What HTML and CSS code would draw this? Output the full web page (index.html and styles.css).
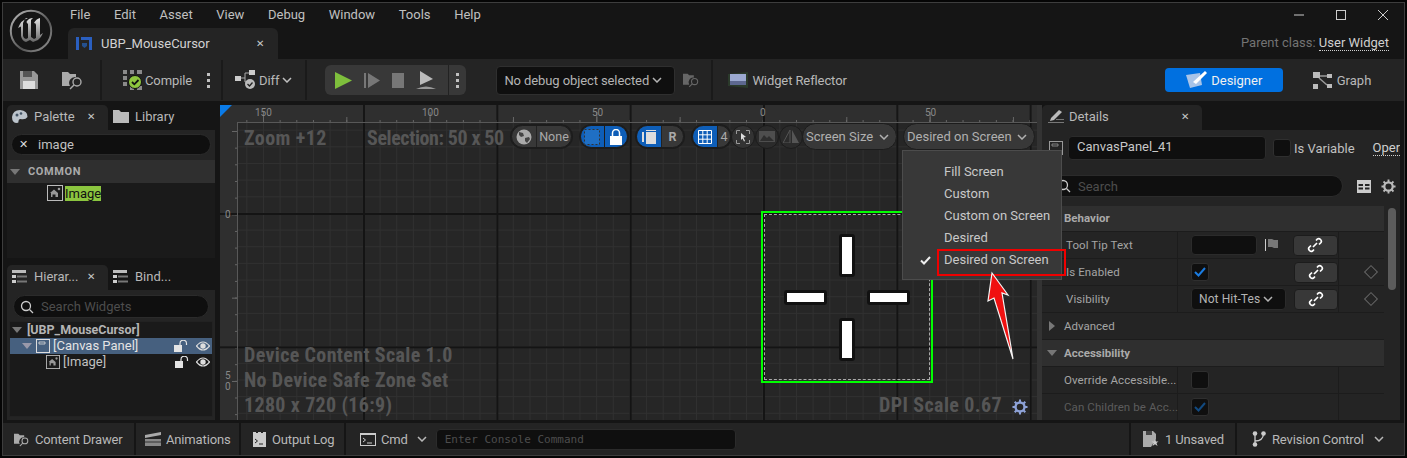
FILE: index.html
```html
<!DOCTYPE html>
<html lang="en">
    <head>
        <meta charset="UTF-8" />
        <title>UBP_MouseCursor</title>
        <link rel="stylesheet" href="styles.css">
    </head>
    <body>
        <svg class="defs" width="0" height="0">
            <symbol id="chev" viewBox="0 0 10 6"><path d="M1 1l4 4 4-4" fill="none" stroke="currentColor" stroke-width="1.5"/></symbol>
            <symbol id="link" viewBox="0 0 16 16"><path d="M9 3.5l1.5-1.5q1.5-1 3 .5t.5 3L12 7.500M7 12.500L5.500 14q-1.500 1-3-.5t-.5-3L4 8.500M6 10l4-4" fill="none" stroke="#fff" stroke-width="1.700"/></symbol>
            <symbol id="unlock" viewBox="0 0 14 12"><rect x="0" y="5" width="8" height="7" fill="#e4e4e4"/><path d="M6 5V3.500a3 3 0 0 1 6.500 0V5" fill="none" stroke="#e4e4e4" stroke-width="1.200"/></symbol>
            <symbol id="eye" viewBox="0 0 14 10"><path d="M.5 5Q7-3 13.500 5Q7 13 .5 5z" fill="none" stroke="#ddd" stroke-width="1.200"/><circle cx="7" cy="5" r="2.700" fill="#ddd"/></symbol>
            <symbol id="img" viewBox="0 0 16 16"><rect x=".5" y=".5" width="15" height="15" fill="none" stroke="#bbb"/><path d="M3 8l4-3.500L11 8v4H8.500V9.500h-3V12H4V8z" fill="#999"/><circle cx="12" cy="4" r="1.300" fill="#999"/></symbol>
            <symbol id="finder" viewBox="0 0 22 20"><path d="M0 2h6l2 2h6v3a6 6 0 0 0-6 9H0z" fill="currentColor"/><circle cx="15" cy="12" r="4" fill="none" stroke="currentColor" stroke-width="1.400"/><path d="M12 15l-4 4" stroke="currentColor" stroke-width="1.400"/></symbol>
            <symbol id="gear" viewBox="0 0 16 16"><circle cx="8" cy="8" r="4.500" fill="none" stroke="currentColor" stroke-width="2.400"/><path d="M8 .5v3M8 12.500v3M.5 8h3M12.500 8h3M2.700 2.700l2 2M11.300 11.300l2 2M13.300 2.700l-2 2M4.700 11.300l-2 2" stroke="currentColor" stroke-width="2"/></symbol>
            <symbol id="list" viewBox="0 0 16 13"><path d="M0 5h4v3H0zM0 10h4v3H0z" fill="#ccc"/><path d="M0 0h14v3H0z" fill="#bbb"/><path d="M5 5.500h10v2H5zM5 10.500h10v2H5z" fill="#777"/></symbol>
        </svg>
        <div class="app">
            <header class="titlebar">
                <div class="logo">
                    <svg width="44" height="44" viewBox="0 0 44 44">
                        <defs>
                            <linearGradient id="lg" x1="0" y1="0" x2="0" y2="1"><stop offset="0" stop-color="#e4e4e4"/><stop offset="1" stop-color="#666"/></linearGradient>
                            <linearGradient id="ring" x1="0" y1="0" x2="1" y2="1"><stop offset="0" stop-color="#bbb"/><stop offset=".6" stop-color="#555"/><stop offset="1" stop-color="#999"/></linearGradient>
                        </defs>
                        <circle cx="22" cy="22" r="20.200" fill="#161616" stroke="url(#ring)" stroke-width="2"/>
                        <path d="M19 9Q12 11 9 19l3-1.500V27q1 5 5 6l4-2 3 2 5-2q3-2 5-7l-3 2V9q-4 1-6 5 2 0 2 2v13l-2 1-3-2V11q1-1 2-2-4 0-6 3-1 1 0 2l1 1v14l-2 1-2-1-1-2V14q1-3 3-5z" fill="url(#lg)"/>
                    </svg>
                </div>
                <div class="title-mid">
                    <nav class="menu">
                        <span>File</span><span>Edit</span><span>Asset</span><span>View</span><span>Debug</span><span>Window</span><span>Tools</span><span>Help</span>
                    </nav>
                    <div class="doc-tab">
                        <svg width="16" height="13" viewBox="0 0 16 13"><path d="M0 0h3v13H0zM5 0h11v3H5zM13 3h3v10h-3z" fill="#2a5fc0"/><path d="M6 6h5v3l-2.500 2L6 9z" fill="#24508f"/></svg>
                        <span class="doc-name">UBP_MouseCursor</span>
                        <span class="x">&#x2715;</span>
                    </div>
                </div>
                <div class="title-right">
                    <div class="win-btns">
                        <svg width="12" height="12" viewBox="0 0 12 12"><path d="M1 6h10" stroke="#ccc"/></svg>
                        <svg width="12" height="12" viewBox="0 0 12 12"><rect x="1.500" y="1.500" width="9" height="9" fill="none" stroke="#ccc"/></svg>
                        <svg width="12" height="12" viewBox="0 0 12 12"><path d="M1 1l10 10M11 1L1 11" stroke="#ccc"/></svg>
                    </div>
                    <div class="parent-class">Parent class: <span class="dotted">User Widget</span></div>
                </div>
            </header>

            <div class="toolbar">
                <svg class="save" width="18" height="18" viewBox="0 0 18 18"><path d="M0 0h14l4 4v14H0z" fill="#999"/><path d="M3 0h9v6H3z" fill="#555"/><path d="M3 10h12v8H3z" fill="#ddd"/></svg>
                <svg class="browse" width="22" height="20" style="color:#aaa"><use href="#finder"/></svg>
                <i class="sep s1"></i>
                <svg class="compile-ic" width="21" height="20" viewBox="0 0 21 20">
                    <path d="M1 0h4v4H1zM8 0h4v4H8zM15 0h5v4h-5zM1 6h4v4H1zM1 12h4v4H1zM8 16h4v4H8zM15 16h5v4h-5z" fill="#8a8a8a"/>
                    <circle cx="13" cy="12" r="6.500" fill="#8ec63f" stroke="#111"/>
                    <path d="M10 12l2.300 2.300L16.500 10" fill="none" stroke="#111" stroke-width="1.800"/>
                </svg>
                <span class="tool-text compile">Compile</span>
                <span class="dots d1"><b></b><b></b><b></b></span>
                <i class="sep s2"></i>
                <svg class="diff-ic" width="22" height="20" viewBox="0 0 22 20"><path d="M0 6h6v5H0zM14 0h6v5h-6z" fill="#ccc"/><path d="M6 8h4V3h4M10 8v4h4" fill="none" stroke="#aaa"/><circle cx="15" cy="14" r="5" fill="#bbb"/><path d="M12.500 14l2 2 3-3.500" fill="none" stroke="#222" stroke-width="1.300"/></svg>
                <span class="tool-text diff">Diff</span>
                <svg class="chev" width="10" height="6"><use href="#chev"/></svg>
                <i class="sep s3"></i>
                <div class="play-group">
                    <svg width="17" height="17" viewBox="0 0 17 17"><path d="M0 0l17 8.500L0 17z" fill="#7ebf3c"/></svg>
                    <svg width="16" height="15" viewBox="0 0 16 15"><path d="M0 0h2v15H0zM4 0l12 7.500L4 15z" fill="#777"/></svg>
                    <span class="stop"></span>
                    <svg width="20" height="18" viewBox="0 0 20 18"><path d="M4 0l13 8-13 6z" fill="#bbb"/><path d="M0 18q10-5 20 0z" fill="#999"/></svg>
                    <span class="play-more"><span class="dots"><b></b><b></b><b></b></span></span>
                </div>
                <div class="debug-select">No debug object selected <svg width="10" height="6"><use href="#chev"/></svg></div>
                <svg class="debug-find" width="17" height="16" viewBox="0 0 22 20" style="color:#666"><use href="#finder"/></svg>
                <i class="sep s4"></i>
                <svg class="reflector-ic" width="20" height="16" viewBox="0 0 20 16"><path d="M0 2l20-2v16L0 14z" fill="#2b3a2b"/><rect x="2" y="2" width="16" height="11" fill="#9ba8d0"/><path d="M2 9h16v4H2z" fill="#5d6890"/></svg>
                <span class="tool-text reflector">Widget Reflector</span>
                <div class="mode-btn">
                    <svg width="24" height="20" viewBox="0 0 24 20"><path d="M1 5l14-2 2 12-12 3z" fill="#a8c4e8"/><path d="M8 12L20 1l2 2-11 11z" fill="#fff"/></svg>
                    Designer
                </div>
                <div class="graph-btn">
                    <svg width="19" height="17" viewBox="0 0 19 17"><path d="M0 0h7v6H0zM14 2h5v4h-5zM0 12h5v5H0zM14 12h5v4h-5z" fill="#bbb"/><path d="M7 4h7M6 6l8 7" stroke="#999" stroke-width="1.500"/></svg>
                    Graph
                </div>
            </div>

            <div class="main">
                <aside class="left-col">
                    <section class="panel palette">
                        <div class="tabs">
                            <div class="tab active">
                                <svg width="16" height="14" viewBox="0 0 16 14"><path d="M8 0Q1 0 0 7q0 6 5 6 2 0 1.500-2 0-2 2-2 5 1 7-2Q16 1 8 0z" fill="#bcc4cc"/><circle cx="5" cy="5" r="1.500" fill="#456"/><circle cx="9" cy="3.500" r="1.300" fill="#456"/></svg>
                                <span class="tab-label">Palette</span><span class="x">&#x2715;</span>
                            </div>
                            <div class="tab">
                                <svg width="16" height="13" viewBox="0 0 16 13"><path d="M0 0h6l2 2h8v11H0z" fill="#bbb"/></svg>
                                <span class="tab-label">Library</span>
                            </div>
                        </div>
                        <div class="panel-body">
                            <div class="pill-search filled"><span class="clear">&#x2715;</span>image</div>
                            <div class="cat-head"><i class="tri-down"></i>COMMON</div>
                            <div class="cat-list">
                                <div class="cat-item"><svg width="16" height="16"><use href="#img"/></svg><mark>Image</mark></div>
                            </div>
                        </div>
                    </section>
                    <section class="panel hierarchy">
                        <div class="tabs">
                            <div class="tab active">
                                <svg width="16" height="13"><use href="#list"/></svg>
                                <span class="tab-label">Hierar...</span><span class="x">&#x2715;</span>
                            </div>
                            <div class="tab">
                                <svg width="16" height="13"><use href="#list"/></svg>
                                <span class="tab-label">Bind...</span>
                            </div>
                        </div>
                        <div class="panel-body">
                            <div class="pill-search hint">
                                <svg width="14" height="14" viewBox="0 0 14 14"><circle cx="6" cy="6" r="4.500" fill="none" stroke="#ccc" stroke-width="1.300"/><path d="M9.500 9.500L13 13" stroke="#ccc" stroke-width="1.300"/></svg>
                                Search Widgets
                            </div>
                            <div class="tree">
                                <div class="tree-row root"><i class="tri-down"></i>[UBP_MouseCursor]</div>
                                <div class="tree-row selected">
                                    <i class="tri-down"></i>
                                    <svg class="panel-ic" width="14" height="14" viewBox="0 0 14 14"><rect x=".5" y=".5" width="13" height="13" fill="none" stroke="#ddd"/><path d="M3 3h6v2H3z" fill="none" stroke="#ddd" stroke-width=".8"/></svg>
                                    <span class="tree-name">[Canvas Panel]</span>
                                    <svg class="lock" width="14" height="12"><use href="#unlock"/></svg>
                                    <svg class="eye" width="14" height="10"><use href="#eye"/></svg>
                                </div>
                                <div class="tree-row child">
                                    <svg width="16" height="14"><use href="#img"/></svg>
                                    <span class="tree-name">[Image]</span>
                                    <svg class="lock" width="14" height="12"><use href="#unlock"/></svg>
                                    <svg class="eye" width="14" height="10"><use href="#eye"/></svg>
                                </div>
                            </div>
                        </div>
                    </section>
                </aside>

                <section class="canvas">
                    <div class="ruler-top"></div>
                    <div class="ruler-left"></div>
                    <div class="corner"></div>
                    <div class="grid"></div>
                    <span class="rnum" style="left:35px">150</span>
                    <span class="rnum" style="left:202px">100</span>
                    <span class="rnum" style="left:372px">50</span>
                    <span class="rnum" style="left:540px">0</span>
                    <span class="rnum" style="left:705px">50</span>
                    <span class="rnum-v" style="top:104px">0</span>
                    <span class="rnum-v" style="top:265px">5<br>0</span>

                    <div class="big-text zoom-text">Zoom +12</div>
                    <div class="big-text sel-text">Selection: 50 x 50</div>
                    <div class="big-text device-text">Device Content Scale 1.0<br>No Device Safe Zone Set<br>1280 x 720 (16:9)</div>
                    <div class="big-text dpi-text">DPI Scale 0.67</div>
                    <svg class="dpi-gear" width="16" height="16"><use href="#gear"/></svg>

                    <div class="view-bar">
                        <div class="pill p-none">
                            <span class="seg icon-seg">
                                <svg width="16" height="16" viewBox="0 0 16 16"><circle cx="8" cy="8" r="7.500" fill="#aaa"/><path d="M3 3l4 1 1 3-3 1-2-2zM9 9l4-1 1 2-3 4-2-2z" fill="#444"/></svg>
                            </span>
                            <span class="seg txt">None</span>
                        </div>
                        <div class="pill p-lock">
                            <span class="seg on">
                                <svg width="16" height="16" viewBox="0 0 16 16"><rect x=".5" y=".5" width="15" height="15" fill="#1f6fc4" stroke="#333" stroke-dasharray="2 2"/></svg>
                            </span>
                            <span class="seg on">
                                <svg width="14" height="16" viewBox="0 0 14 16"><rect x="1" y="7" width="12" height="9" fill="#fff"/><path d="M3.500 7V4a3.500 3.500 0 0 1 7 0v3" fill="none" stroke="#fff" stroke-width="1.500"/></svg>
                            </span>
                        </div>
                        <div class="pill p-r">
                            <span class="seg on">
                                <svg width="14" height="14" viewBox="0 0 14 14"><path d="M0 2h2v10H0zM4 2h10v12H4zM4 0h10v1H4z" fill="#ddd"/></svg>
                            </span>
                            <span class="seg txt bold">R</span>
                        </div>
                        <div class="pill p-grid">
                            <span class="seg on">
                                <svg width="14" height="14" viewBox="0 0 14 14"><path d="M.5 .5h13v13h-13zM.5 4.800h13M.5 9.200h13M4.800 .5v13M9.200 .5v13" fill="none" stroke="#fff"/></svg>
                            </span>
                            <span class="seg txt">4</span>
                        </div>
                        <span class="round">
                            <svg width="14" height="14" viewBox="0 0 14 14"><path d="M.5 4V.5H4M10 .5h3.500V4M13.500 10v3.500H10M4 13.500H.5V10" fill="none" stroke="#999"/><path d="M5 3l5 4-2.500 .5L9 11l-1 .5-1.500-3L5 10z" fill="#ddd"/></svg>
                        </span>
                        <span class="round dim">
                            <svg width="16" height="11" viewBox="0 0 16 11"><path d="M0 0h16v11H0z" fill="#4e4e4e"/><path d="M1 10l4-6 3 3 2-2 5 5z" fill="#2e2e2e"/></svg>
                        </span>
                        <span class="round dim last">
                            <svg width="16" height="13" viewBox="0 0 16 13"><path d="M7 0v13H0z" fill="none" stroke="#555"/><path d="M9 0v13h7z" fill="#555"/></svg>
                        </span>
                        <div class="drop size-drop">Screen Size <svg width="10" height="6"><use href="#chev"/></svg></div>
                        <div class="drop fill-drop">Desired on Screen <svg width="10" height="6"><use href="#chev"/></svg></div>
                    </div>

                    <div class="widget">
                        <i class="bar v top"></i>
                        <i class="bar v bottom"></i>
                        <i class="bar h left"></i>
                        <i class="bar h right"></i>
                    </div>
                </section>

                <aside class="details">
                    <div class="tabs">
                        <div class="tab active details-tab">
                            <svg width="16" height="15" viewBox="0 0 16 15"><path d="M3 9L11 1l3 2-8 8-4 1z" fill="#bbb"/><path d="M0 13h16v1H0zM8 10h8v1H8z" fill="#777"/></svg>
                            <span class="tab-label">Details</span><span class="x">&#x2715;</span>
                        </div>
                    </div>
                    <div class="details-body">
                        <div class="name-row">
                            <svg width="14" height="14" viewBox="0 0 14 14"><rect x=".5" y=".5" width="13" height="13" fill="none" stroke="#999"/><path d="M3 3h6v2H3z" fill="none" stroke="#999" stroke-width=".8"/></svg>
                            <div class="name-input">CanvasPanel_41</div>
                            <span class="check"></span>
                            <span class="var-label">Is Variable</span>
                            <span class="open-link dotted">Oper</span>
                        </div>
                        <div class="search-row">
                            <div class="pill-search hint wide">
                                <svg width="14" height="14" viewBox="0 0 14 14"><circle cx="6" cy="6" r="4.500" fill="none" stroke="#ccc" stroke-width="1.300"/><path d="M9.500 9.500L13 13" stroke="#ccc" stroke-width="1.300"/></svg>
                                Search
                            </div>
                            <svg width="14" height="13" viewBox="0 0 14 13"><path d="M0 0h14v13H0z" fill="#ccc"/><path d="M1.500 4h4.500v2H1.500zM8 4h4.500v2H8zM1.500 7.500h4.500v2H1.500zM8 7.500h4.500v2H8z" fill="#242424"/></svg>
                            <svg class="opt-gear" width="15" height="15"><use href="#gear"/></svg>
                        </div>
                        <div class="props-wrap">
                            <div class="props">
                                <div class="sec-head">Behavior</div>
                                <div class="prop">
                                    <span class="p-name">Tool Tip Text</span>
                                    <span class="p-value"><span class="text-box"></span>
                                        <svg class="flag" width="14" height="12" viewBox="0 0 14 12"><path d="M0 0h1v12H0z" fill="#ccc"/><path d="M3 0h4l2 1h4v8H9L7 8H3z" fill="#777"/></svg>
                                        <span class="bind"><svg width="16" height="16"><use href="#link"/></svg></span>
                                    </span>
                                    <span class="p-reset"></span>
                                </div>
                                <div class="prop">
                                    <span class="p-name">Is Enabled</span>
                                    <span class="p-value"><span class="check on"><svg width="12" height="10" viewBox="0 0 12 10"><path d="M1 5l3.500 3.500L11 1" fill="none" stroke="#1a7be0" stroke-width="2"/></svg></span>
                                        <span class="bind"><svg width="16" height="16"><use href="#link"/></svg></span>
                                    </span>
                                    <span class="p-reset"><i class="diamond"></i></span>
                                </div>
                                <div class="prop">
                                    <span class="p-name">Visibility</span>
                                    <span class="p-value"><span class="vis-select">Not Hit-Tes <svg width="10" height="6"><use href="#chev"/></svg></span>
                                        <span class="bind near"><svg width="16" height="16"><use href="#link"/></svg></span>
                                    </span>
                                    <span class="p-reset"><i class="diamond"></i></span>
                                </div>
                                <div class="sec-row"><i class="tri-right"></i>Advanced</div>
                                <div class="sec-head open"><i class="tri-down"></i>Accessibility</div>
                                <div class="prop acc">
                                    <span class="p-name">Override Accessible...</span>
                                    <span class="p-value"><span class="check"></span></span>
                                    <span class="p-reset"></span>
                                </div>
                                <div class="prop acc off">
                                    <span class="p-name">Can Children be Acc...</span>
                                    <span class="p-value"><span class="check on"><svg width="12" height="10" viewBox="0 0 12 10"><path d="M1 5l3.500 3.500L11 1" fill="none" stroke="#124a80" stroke-width="2"/></svg></span></span>
                                    <span class="p-reset"></span>
                                </div>
                            </div>
                            <div class="scroll"><i></i></div>
                        </div>
                    </div>
                </aside>
            </div>

            <footer class="statusbar">
                <div class="st-item drawer">
                    <svg width="16" height="15" viewBox="0 0 22 20" style="color:#aaa"><use href="#finder"/></svg>
                    Content Drawer
                </div>
                <div class="st-item anim">
                    <svg width="16" height="14" viewBox="0 0 16 14"><path d="M0 7h16v7H0z" fill="#888"/><path d="M0 3l16-3v3L0 6z" fill="#aaa"/><path d="M0 10h16" stroke="#333"/></svg>
                    Animations
                </div>
                <div class="st-item log">
                    <svg width="13" height="16" viewBox="0 0 13 16"><path d="M0 1h3v1h2V1h3v1h2V1h3v15H0z" fill="#ccc"/><path d="M2 8l2.500 2L2 12M6 13h4" fill="none" stroke="#222"/></svg>
                    Output Log
                </div>
                <div class="st-item cmd">
                    <svg width="16" height="13" viewBox="0 0 16 13"><rect x=".5" y=".5" width="15" height="12" fill="none" stroke="#ccc"/><path d="M0 0h16v2H0z" fill="#ccc"/><path d="M3 5l2.500 2L3 9M7 10h5" fill="none" stroke="#ccc"/></svg>
                    Cmd
                    <svg class="cmd-chev" width="10" height="6"><use href="#chev"/></svg>
                    <div class="console">Enter Console Command</div>
                </div>
                <div class="st-item unsaved">
                    <svg width="16" height="16" viewBox="0 0 16 16"><path d="M0 0h10l3 3v5l-5 8H0z" fill="#aaa"/><path d="M3 0h6v4H3z" fill="#444"/><path d="M12 8l1 2.500h2.500L13.500 12l1 3-2.500-1.700L9.500 15l1-3-2-1.500H11z" fill="#ccc"/></svg>
                    1 Unsaved
                </div>
                <div class="st-item revision">
                    <svg width="14" height="16" viewBox="0 0 14 16"><circle cx="3" cy="2.500" r="2.300" fill="#ccc"/><circle cx="3" cy="13.500" r="2.300" fill="#ccc"/><circle cx="11.500" cy="2.500" r="2.300" fill="#ccc"/><path d="M3 3v9M3 10q8 0 8.500-7" fill="none" stroke="#ccc" stroke-width="1.300"/></svg>
                    Revision Control
                    <svg class="cmd-chev" width="10" height="6"><use href="#chev"/></svg>
                </div>
            </footer>

            <div class="size-menu">
                <div class="menu-item">Fill Screen</div>
                <div class="menu-item">Custom</div>
                <div class="menu-item">Custom on Screen</div>
                <div class="menu-item">Desired</div>
                <div class="menu-item current">
                    <svg class="tick" width="11" height="9" viewBox="0 0 11 9"><path d="M1 4.500l3 3L10 1" fill="none" stroke="#eee" stroke-width="2"/></svg>
                    Desired on Screen
                </div>
            </div>
            <svg class="callout" width="32" height="92" viewBox="0 0 32 92">
                <path d="M8 2L24 24 18 22 29 88 10 27 4 30z" fill="#f01010" stroke="#f4f4f4" stroke-width="1.200"/>
            </svg>
        </div>
    </body>
</html>
```

FILE: styles.css
```css
* {
    box-sizing: border-box;
}
html,
body {
    margin: 0;
    width: 1407px;
    height: 458px;
    overflow: hidden;
    background-color: #050505;
}
body {
    font-family: Roboto, "Noto Sans", sans-serif;
    font-size: 13px;
    color: #c0c0c0;
}
.defs {
    position: absolute;
}
svg {
    flex: none;
    display: block;
}
.app {
    position: relative;
    margin: 2px;
    width: 1403px;
    height: 454px;
    border: 1px solid #3d3d3d;
    background-color: #151515;
    display: flex;
    flex-direction: column;
}
.dotted {
    color: #d0d0d0;
    border-bottom: 1px dotted #d0d0d0;
}
.x {
    font-size: 10px;
    color: #c8c8c8;
}

/* title bar */
.titlebar {
    height: 56px;
    display: flex;
    flex: none;
}
.logo {
    width: 65px;
    padding: 6px 0 0 6px;
}
.title-mid {
    flex: 1;
    display: flex;
    flex-direction: column;
}
.menu {
    height: 25px;
    display: flex;
    align-items: center;
    gap: 23.6px;
    padding: 0 0 2px 2px;
}
.doc-tab {
    width: 210px;
    height: 31px;
    background-color: #242424;
    border-radius: 6px 6px 0 0;
    display: flex;
    align-items: center;
    padding: 0 14px 0 8px;
}
.doc-name {
    flex: 1;
    margin-left: 9px;
    color: #d2d2d2;
}
.title-right {
    width: 170px;
    padding-right: 15px;
    text-align: right;
}
.win-btns {
    display: flex;
    justify-content: flex-end;
    gap: 30px;
    height: 25px;
    padding-top: 6px;
}
.parent-class {
    color: #737373;
    padding-top: 7px;
    white-space: nowrap;
}

/* toolbar */
.toolbar {
    height: 42px;
    flex: none;
    background-color: #242424;
    display: flex;
    align-items: center;
    padding-left: 17px;
}
.tool-text {
    color: #b8b8b8;
    letter-spacing: -0.1px;
}
.sep {
    width: 2px;
    height: 40px;
    background-color: #1a1a1a;
    flex: none;
}
.browse { margin-left: 24px; }
.s1 { margin-left: 16px; }
.compile-ic { margin-left: 20px; }
.compile { margin-left: 2px; }
.dots {
    display: inline-flex;
    flex-direction: column;
    gap: 3px;
}
.dots b {
    width: 3px;
    height: 3px;
    background-color: #c0c0c0;
}
.d1 { margin-left: 15px; }
.s2 { margin-left: 11px; }
.diff-ic { margin-left: 12px; }
.diff { margin-left: 2px; }
.chev { margin-left: 3px; }
.s3 { margin-left: 13px; }
.play-group {
    margin-left: 18px;
    width: 141px;
    height: 30px;
    background-color: #383838;
    border-radius: 6px;
    display: flex;
    align-items: center;
    padding-left: 10px;
    gap: 12px;
    flex: none;
}
.stop {
    width: 14px;
    height: 15px;
    background-color: #777;
}
.play-more {
    margin-left: auto;
    width: 22px;
    height: 30px;
    border-left: 1px solid #222;
    display: flex;
    align-items: center;
    justify-content: center;
}
.debug-select {
    margin-left: 30px;
    width: 179px;
    height: 29px;
    background-color: #0f0f0f;
    border: 1px solid #2f2f2f;
    border-radius: 4px;
    display: flex;
    align-items: center;
    justify-content: space-between;
    padding: 0 12px 0 7px;
    color: #b4b4b4;
    letter-spacing: -0.1px;
    white-space: nowrap;
    flex: none;
}
.debug-find { margin-left: 8px; }
.s4 { margin-left: 11px; }
.reflector-ic { margin-left: 15px; }
.reflector { margin-left: 4px; }
.mode-btn {
    margin-left: 318px;
    width: 118px;
    height: 24px;
    background-color: #0070e0;
    border-radius: 4px;
    color: #f0f0f0;
    display: flex;
    align-items: center;
    justify-content: center;
    gap: 2px;
}
.graph-btn {
    margin-left: 30px;
    display: flex;
    align-items: center;
    gap: 5px;
    color: #b8b8b8;
}

/* main area */
.main {
    flex: 1;
    display: flex;
    padding: 4px 0 0 4px;
    min-height: 0;
}
.left-col {
    width: 208px;
    display: flex;
    flex-direction: column;
    gap: 7px;
}
.panel {
    display: flex;
    flex-direction: column;
}
.palette { height: 153px; }
.hierarchy { height: 155px; }
.tabs {
    height: 25px;
    display: flex;
    flex: none;
}
.tab {
    width: 101px;
    display: flex;
    align-items: center;
    padding: 0 13px 2px 5px;
    border-radius: 5px 5px 0 0;
}
.tab.active {
    background-color: #242424;
}
.tab:not(.active) {
    width: 100px;
}
.tab-label {
    flex: 1;
    margin-left: 6px;
    color: #b8b8b8;
    white-space: nowrap;
}
.panel-body {
    flex: 1;
    background-color: #242424;
    display: flex;
    flex-direction: column;
    min-height: 0;
}
.pill-search {
    background-color: #0f0f0f;
    border: 1px solid #2b2b2b;
    border-radius: 12px;
    display: flex;
    align-items: center;
    margin: 4px 4px 5px;
    color: #c0c0c0;
}
.filled {
    height: 21px;
}
.clear {
    width: 26px;
    padding-left: 7px;
    font-size: 11px;
    color: #ddd;
}
.hint {
    height: 23px;
    padding-left: 6px;
    gap: 7px;
    color: #4d4d4d;
    margin: 5px 6px 3px;
}
.cat-head {
    height: 23px;
    background-color: #2f2f2f;
    display: flex;
    align-items: center;
    font-size: 11px;
    font-weight: 700;
    color: #aaa;
    letter-spacing: 0.6px;
    padding-left: 3px;
    gap: 8px;
}
.tri-down {
    width: 0;
    height: 0;
    flex: none;
    border-left: 5px solid transparent;
    border-right: 5px solid transparent;
    border-top: 6px solid #777;
}
.tri-right {
    width: 0;
    height: 0;
    flex: none;
    border-top: 5px solid transparent;
    border-bottom: 5px solid transparent;
    border-left: 6px solid #777;
}
.cat-list {
    flex: 1;
    background-color: #1a1a1a;
    padding: 2px 0 0 40px;
}
.cat-item {
    display: flex;
    align-items: center;
    gap: 2px;
}
mark {
    background-color: #8bc53f;
    color: #111;
    line-height: 15px;
}
.tree {
    flex: 1;
    margin: 0 2px 3px;
    background-color: #1a1a1a;
    border: 1px solid #222;
}
.tree-row {
    height: 16px;
    display: flex;
    align-items: center;
    white-space: nowrap;
    padding-bottom: 1px;
}
.root {
    font-weight: 700;
    font-size: 12.5px;
    color: #b4b4b4;
    padding-left: 2px;
    gap: 5px;
}
.selected {
    background-color: #46607f;
    color: #e4e4e4;
    padding-left: 12px;
    gap: 3px;
}
.child {
    padding-left: 35px;
    gap: 2px;
}
.selected .tri-down {
    border-top-color: #99a;
}
.panel-ic {
    margin-left: 1px;
}
.lock {
    margin-left: auto;
}
.eye {
    margin: 0 2px 0 5px;
}

/* canvas */
.canvas {
    position: relative;
    margin-left: 5px;
    width: 822px;
    border-right: 5px solid #333;
    background-color: #2f2f2f;
    overflow: hidden;
    flex: none;
}
.ruler-top {
    position: absolute;
    left: 17px;
    right: 0;
    top: 0;
    height: 17px;
    background-image:
        linear-gradient(90deg, #161616 0 2px, transparent 2px),
        linear-gradient(90deg, #666 0 1px, transparent 1px),
        linear-gradient(90deg, #666 0 1px, transparent 1px),
        linear-gradient(90deg, #666 0 1px, transparent 1px);
    background-size: 133.33px 17px, 166.67px 10px, 83.33px 5px, 16.667px 2px;
    background-position: 126px 0, 26px 100%, 26px 100%, 9.33px 100%;
    background-repeat: repeat-x;
}
.ruler-left {
    position: absolute;
    left: 0;
    top: 17px;
    bottom: 0;
    width: 17px;
    background-image:
        linear-gradient(180deg, #161616 0 2px, transparent 2px),
        linear-gradient(180deg, #666 0 1px, transparent 1px),
        linear-gradient(180deg, #666 0 1px, transparent 1px);
    background-size: 17px 133.33px, 5px 83.33px, 2px 16.667px;
    background-position: 0 91px, 100% 9px, 100% 9px;
    background-repeat: repeat-y;
}
.corner {
    position: absolute;
    left: 0;
    top: 0;
    width: 0;
    height: 0;
    border-top: 12px solid #0a7be8;
    border-right: 12px solid transparent;
}
.grid {
    position: absolute;
    left: 17px;
    top: 17px;
    right: 0;
    bottom: 0;
    border-top: 1px solid #585858;
    border-left: 1px solid #585858;
    background-color: #262626;
    background-image:
        linear-gradient(90deg, #141414 0 2px, transparent 2px),
        linear-gradient(180deg, #141414 0 2px, transparent 2px),
        linear-gradient(90deg, #303030 0 1px, transparent 1px),
        linear-gradient(180deg, #303030 0 1px, transparent 1px);
    background-size: 133.33px 133.33px, 133.33px 133.33px, 16.667px 16.667px, 16.667px 16.667px;
    background-position: 125px 0, 0 90px, 8.33px 0, 0 6.67px;
}
.rnum {
    position: absolute;
    top: 2px;
    font-size: 10px;
    color: #888;
}
.rnum-v {
    position: absolute;
    left: 5px;
    font-size: 10px;
    line-height: 11px;
    color: #888;
}
.big-text {
    position: absolute;
    font-weight: 700;
    font-size: 20px;
    line-height: 25px;
    color: #565656;
    font-stretch: 75%;
    white-space: nowrap;
}
.zoom-text { left: 24px; top: 21px; letter-spacing: 0.4px; }
.sel-text { left: 147px; top: 21px; letter-spacing: -0.4px; }
.device-text { left: 24px; top: 238px; letter-spacing: 0.35px; }
.dpi-text { left: 659px; top: 288px; letter-spacing: 0.4px; }
.dpi-gear {
    position: absolute;
    left: 792px;
    top: 294px;
    color: #8fa3d8;
}
.view-bar {
    position: absolute;
    left: 291px;
    top: 18px;
    display: flex;
    align-items: center;
    gap: 8px;
}
.pill {
    height: 23px;
    display: flex;
    border-radius: 12px;
    overflow: hidden;
    border: 1px solid #1c1c1c;
    box-shadow: 0 0 0 1px #1c1c1c;
    background-color: #383838;
    font-size: 12.5px;
    color: #aaa;
}
.seg {
    display: flex;
    align-items: center;
    justify-content: center;
    border-left: 1px solid #222;
}
.seg:first-child { border-left: 0; }
.seg.on {
    background-color: #0e5eb8;
    border-left-color: #1c1c1c;
}
.p-none { width: 61px; }
.p-none .seg:first-child { width: 24px; }
.p-none .seg:last-child { flex: 1; }
.p-lock { width: 48px; }
.p-lock .seg { flex: 1; }
.p-r { width: 48px; }
.p-r .seg:first-child { width: 24px; }
.p-r .seg:last-child { flex: 1; }
.bold { font-weight: 700; }
.p-grid { width: 39px; margin-right: -8px; }
.p-grid .seg:first-child { width: 24px; }
.p-grid .seg:last-child { flex: 1; }
.round {
    width: 24px;
    height: 24px;
    margin-right: -8px;
    border-radius: 50%;
    background-color: #333;
    border: 1px solid #1c1c1c;
    display: flex;
    align-items: center;
    justify-content: center;
}
.round.dim {
    background-color: #2b2b2b;
}
.round.last {
    margin-right: -9px;
}
.drop {
    height: 27px;
    border: 1px solid #1c1c1c;
    border-radius: 14px;
    background-color: #383838;
    display: flex;
    align-items: center;
    justify-content: space-between;
    padding: 0 7px 0 3px;
    color: #b0b0b0;
    white-space: nowrap;
    flex: none;
}
.size-drop {
    width: 95px;
    margin-right: -2px;
}
.fill-drop {
    width: 132px;
}
.widget {
    position: absolute;
    left: 541px;
    top: 106px;
    width: 172px;
    height: 172px;
    border: 2px solid #00ff00;
    outline: 1px dashed #aaa;
    outline-offset: -4px;
}
.bar {
    position: absolute;
    background-color: #fff;
    border: 3px solid #111;
    border-radius: 3px;
}
.bar.v { width: 16px; height: 43px; left: 76px; }
.bar.h { width: 43px; height: 15px; top: 77px; }
.bar.top { top: 21px; }
.bar.bottom { top: 105px; }
.bar.left { left: 21px; }
.bar.right { left: 104px; }

/* details */
.details {
    width: 358px;
    display: flex;
    flex-direction: column;
    flex: none;
}
.details-tab {
    width: 160px;
    padding: 0 13px 2px 6px;
}
.details-tab .tab-label { margin-left: 5px; }
.details-body {
    flex: 1;
    background-color: #242424;
    min-height: 0;
    display: flex;
    flex-direction: column;
}
.name-row {
    height: 36px;
    display: flex;
    align-items: center;
    padding-left: 7px;
    white-space: nowrap;
    overflow: hidden;
    flex: none;
}
.name-input {
    width: 198px;
    height: 24px;
    flex: none;
    margin-left: 5px;
    background-color: #0f0f0f;
    border: 1px solid #2b2b2b;
    border-radius: 4px;
    padding-left: 8px;
    line-height: 20px;
    color: #c8c8c8;
}
.check {
    width: 18px;
    height: 18px;
    flex: none;
    background-color: #0f0f0f;
    border: 1px solid #2f2f2f;
    border-radius: 3px;
    display: inline-flex;
    align-items: center;
    justify-content: center;
}
.name-row .check { margin-left: 7px; }
.var-label { margin-left: 3px; }
.open-link { margin-left: 18px; }
.search-row {
    height: 40px;
    display: flex;
    align-items: center;
    flex: none;
}
.wide {
    width: 293px;
    height: 22px;
    margin: 0 14px 0 8px;
    flex: none;
}
.opt-gear {
    margin-left: 10px;
    color: #bbb;
}
.props-wrap {
    flex: 1;
    display: flex;
    min-height: 0;
}
.props {
    width: 342px;
    overflow: hidden;
}
.sec-head {
    height: 26px;
    background-color: #2f2f2f;
    border-bottom: 1px solid #1c1c1c;
    display: flex;
    align-items: center;
    gap: 7px;
    padding: 0 0 1px 22px;
    font-size: 11.5px;
    font-weight: 700;
    color: #aaa;
}
.sec-head.open {
    height: 27px;
    padding-left: 5px;
}
.sec-row {
    height: 27px;
    border-bottom: 1px solid #1c1c1c;
    display: flex;
    align-items: center;
    gap: 9px;
    padding-left: 7px;
    font-size: 11.5px;
    color: #a4a4a4;
}
.prop {
    height: 27px;
    display: flex;
    align-items: center;
    border-bottom: 1px solid #1c1c1c;
    font-size: 11.5px;
    letter-spacing: 0.1px;
    color: #a4a4a4;
}
.prop.off {
    color: #5c5c5c;
}
.p-name {
    width: 136px;
    height: 100%;
    padding-left: 24px;
    display: flex;
    align-items: center;
    border-right: 1px solid #1c1c1c;
    white-space: nowrap;
}
.acc .p-name { padding-left: 22px; }
.p-value {
    width: 161px;
    height: 100%;
    padding-left: 13px;
    display: flex;
    align-items: center;
    border-right: 1px solid #1c1c1c;
}
.p-reset {
    flex: 1;
    display: flex;
    align-items: center;
    justify-content: flex-end;
    padding-right: 8px;
}
.text-box {
    width: 67px;
    height: 20px;
    background-color: #0f0f0f;
    border: 1px solid #2b2b2b;
    border-radius: 4px;
}
.flag { margin-left: 8px; }
.bind {
    width: 46px;
    height: 21px;
    margin-left: 14px;
    background-color: #383838;
    border: 1px solid #1c1c1c;
    border-radius: 4px;
    display: flex;
    align-items: center;
    justify-content: center;
}
.check.on + .bind { margin-left: 85px; }
.bind.near { margin-left: 8px; }
.vis-select {
    width: 95px;
    height: 22px;
    flex: none;
    background-color: #0f0f0f;
    border: 1px solid #2b2b2b;
    border-radius: 4px;
    display: flex;
    align-items: center;
    justify-content: space-between;
    padding: 0 12px 0 7px;
    font-size: 12px;
    color: #b4b4b4;
    white-space: nowrap;
}
.diamond {
    width: 10px;
    height: 10px;
    border: 1px solid #666;
    transform: rotate(45deg);
}
.scroll {
    flex: 1;
    padding: 2px 0 0 4px;
}
.scroll i {
    display: block;
    width: 8px;
    height: 82px;
    border-radius: 4px;
    background-color: #5c5c5c;
}

/* status bar */
.statusbar {
    height: 32px;
    flex: none;
    margin-top: 3px;
    display: flex;
    background-color: #242424;
    color: #b8b8b8;
    letter-spacing: -0.15px;
}
.st-item {
    display: flex;
    align-items: center;
    gap: 5px;
    border-right: 2px solid #151515;
    white-space: nowrap;
}
.drawer { width: 133px; padding-left: 11px; }
.anim { width: 105px; padding-left: 9px; }
.log { width: 105px; padding-left: 12px; gap: 6px; }
.cmd { width: 785px; padding-left: 14px; }
.cmd-chev { margin-left: 4px; }
.console {
    margin-left: 4px;
    width: 300px;
    height: 21px;
    background-color: #0f0f0f;
    border: 1px solid #2b2b2b;
    border-radius: 4px;
    padding-left: 8px;
    line-height: 19px;
    font-family: "DejaVu Sans Mono", monospace;
    font-size: 11px;
    letter-spacing: 0;
    color: #4d4d4d;
}
.unsaved { width: 106px; padding-left: 12px; gap: 6px; }
.revision { padding-left: 15px; width: 162px; gap: 6px; border-right: 0; }

/* dropdown over the canvas and details */
.size-menu {
    position: absolute;
    left: 899px;
    top: 147px;
    width: 160px;
    height: 130px;
    background-color: #383838;
    border: 1px solid #4c4c4c;
    padding-top: 10px;
    color: #c8c8c8;
}
.menu-item {
    height: 22px;
    line-height: 22px;
    padding-left: 41px;
    position: relative;
}
.menu-item.current::after {
    content: "";
    position: absolute;
    left: 34px;
    top: 0;
    width: 125px;
    height: 23px;
    border: 2px solid #f00000;
    outline: 1px solid #f00000;
    outline-offset: -1px;
}
.tick {
    position: absolute;
    left: 17px;
    top: 7px;
}
.callout {
    position: absolute;
    left: 981px;
    top: 268px;
}
```
